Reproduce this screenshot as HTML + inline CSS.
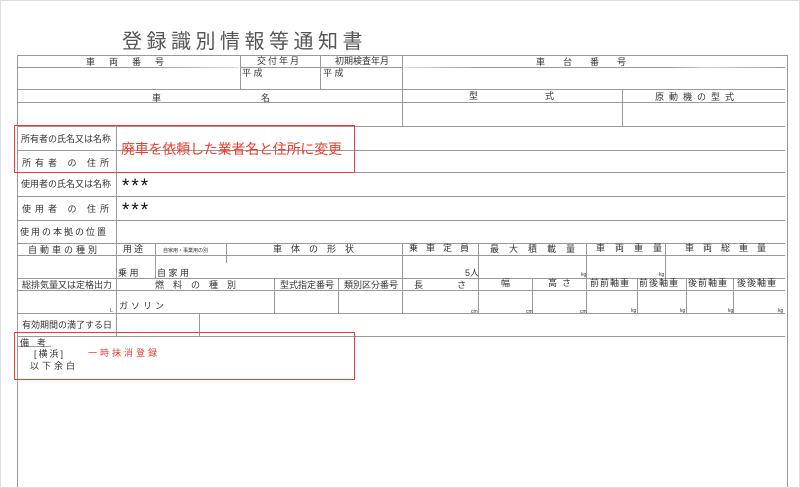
<!DOCTYPE html><html><head><meta charset="utf-8"><style>
body{margin:0;width:800px;height:488px;background:#fff;position:relative;overflow:hidden;font-family:"Liberation Sans","Noto Sans CJK JP",sans-serif;color:#333}
.h{position:absolute;height:1px;background:#999}
.v{position:absolute;width:1px;background:#999}
.t{position:absolute;font-size:9px;white-space:nowrap;line-height:10px}
.r{position:absolute;border:1.5px solid #e8402f}
</style></head><body>
<div style="position:absolute;left:0;top:0;width:798px;height:486px;border:1px solid #ddd"></div>
<div class="t" style="left:122px;top:30px;font-size:20px;line-height:24px;letter-spacing:4.5px;color:#555">登録識別情報等通知書</div>
<!-- frame -->
<div class="v" style="left:17px;top:55px;height:432px"></div>
<div class="v" style="left:787px;top:55px;height:432px"></div>
<div class="h" style="left:17px;top:55px;width:771px"></div>
<div class="h" style="left:17px;top:67px;width:222px;background:linear-gradient(90deg,#999 60%,#ddd)"></div>
<div class="h" style="left:402px;top:67px;width:383px;background:linear-gradient(90deg,#ddd,#999 20%,#999 70%,#ccc 80%,#999)"></div>
<div class="h" style="left:240px;top:67px;width:162px"></div>
<div class="h" style="left:17px;top:89px;width:768px"></div>
<div class="h" style="left:17px;top:102px;width:768px"></div>
<div class="h" style="left:17px;top:126px;width:768px"></div>
<div class="h" style="left:17px;top:150px;width:768px"></div>
<div class="h" style="left:17px;top:172px;width:768px"></div>
<div class="h" style="left:17px;top:196px;width:768px"></div>
<div class="h" style="left:17px;top:220px;width:768px"></div>
<div class="h" style="left:17px;top:243px;width:768px"></div>
<div class="h" style="left:17px;top:255px;width:768px"></div>
<div class="h" style="left:17px;top:278px;width:768px"></div>
<div class="h" style="left:17px;top:290px;width:768px"></div>
<div class="h" style="left:17px;top:313px;width:768px"></div>
<div class="h" style="left:17px;top:336px;width:768px"></div>
<div class="h" style="left:17px;top:346px;width:34px"></div>
<!-- verticals -->
<div class="v" style="left:240px;top:55px;height:34px"></div>
<div class="v" style="left:320px;top:55px;height:34px"></div>
<div class="v" style="left:402px;top:55px;height:34px"></div>
<div class="v" style="left:402px;top:89px;height:37px"></div>
<div class="v" style="left:622px;top:89px;height:37px"></div>
<div class="v" style="left:116px;top:126px;height:210px"></div>
<div class="v" style="left:155px;top:243px;height:35px"></div>
<div class="v" style="left:226px;top:243px;height:20px"></div>
<div class="v" style="left:402px;top:243px;height:70px"></div>
<div class="v" style="left:478px;top:243px;height:70px"></div>
<div class="v" style="left:586px;top:243px;height:70px"></div>
<div class="v" style="left:665px;top:243px;height:35px"></div>
<div class="v" style="left:274px;top:278px;height:35px"></div>
<div class="v" style="left:338px;top:278px;height:35px"></div>
<div class="v" style="left:532px;top:278px;height:35px"></div>
<div class="v" style="left:637px;top:278px;height:35px"></div>
<div class="v" style="left:686px;top:278px;height:35px"></div>
<div class="v" style="left:733px;top:278px;height:35px"></div>
<div class="v" style="left:199px;top:313px;height:23px"></div>
<!-- text -->
<div class="t" style="left:86px;top:57px;letter-spacing:14px">車両番号</div>
<div class="t" style="left:257px;top:56px;letter-spacing:2px">交付年月</div>
<div class="t" style="left:335px;top:56px">初期検査年月</div>
<div class="t" style="left:242px;top:68px">平 成</div>
<div class="t" style="left:323px;top:68px">平 成</div>
<div class="t" style="left:536px;top:57px;letter-spacing:18px">車台番号</div>
<div class="t" style="left:152px;top:93px">車</div>
<div class="t" style="left:261px;top:93px">名</div>
<div class="t" style="left:469px;top:91px">型</div>
<div class="t" style="left:545px;top:91px">式</div>
<div class="t" style="left:655px;top:92px;letter-spacing:5px">原動機の型式</div>
<div class="t" style="left:21px;top:134px">所有者の氏名又は名称</div>
<div class="t" style="left:22px;top:158px;letter-spacing:4px">所有者 の 住所</div>
<div class="t" style="left:21px;top:179px">使用者の氏名又は名称</div>
<div class="t" style="left:22px;top:204px;letter-spacing:4px">使用者 の 住所</div>
<div class="t" style="left:20px;top:227px;letter-spacing:2px">使用の本拠の位置</div>
<div class="t" style="left:121px;top:140px;font-size:14px;line-height:18px;letter-spacing:-0.2px;color:#e8402f">廃車を依頼した業者名と住所に変更</div>
<div class="t" style="left:122px;top:179px;font-size:19px;line-height:16px;letter-spacing:2px;color:#111">***</div>
<div class="t" style="left:122px;top:203px;font-size:19px;line-height:16px;letter-spacing:2px;color:#111">***</div>
<div class="t" style="left:28px;top:245px;letter-spacing:3px">自動車の種別</div>
<div class="t" style="left:123px;top:244px;letter-spacing:2px">用途</div>
<div class="t" style="left:163px;top:246px;font-size:5px">自家用・事業用の別</div>
<div class="t" style="left:273px;top:244px;letter-spacing:9px">車体の形状</div>
<div class="t" style="left:118px;top:268px">乗 用</div>
<div class="t" style="left:157px;top:268px">自 家 用</div>
<div class="t" style="left:409px;top:243px;letter-spacing:8px">乗車定員</div>
<div class="t" style="left:465px;top:268px">5人</div>
<div class="t" style="left:490px;top:244px;letter-spacing:10px">最大積載量</div>
<div class="t" style="left:596px;top:243px;letter-spacing:10px">車両重量</div>
<div class="t" style="left:685px;top:243px;letter-spacing:9px">車両総重量</div>
<div class="t" style="left:581px;top:270px;font-size:5px">kg</div>
<div class="t" style="left:659px;top:270px;font-size:5px">kg</div>
<div class="t" style="left:22px;top:280px">総排気量又は定格出力</div>
<div class="t" style="left:155px;top:280px;letter-spacing:9px">燃料の種別</div>
<div class="t" style="left:280px;top:280px">型式指定番号</div>
<div class="t" style="left:344px;top:280px">類別区分番号</div>
<div class="t" style="left:414px;top:280px">長</div>
<div class="t" style="left:457px;top:280px">さ</div>
<div class="t" style="left:501px;top:278px">幅</div>
<div class="t" style="left:548px;top:278px;letter-spacing:5px">高さ</div>
<div class="t" style="left:590px;top:278px;letter-spacing:1px">前前軸重</div>
<div class="t" style="left:639px;top:278px;letter-spacing:1px">前後軸重</div>
<div class="t" style="left:688px;top:278px;letter-spacing:1px">後前軸重</div>
<div class="t" style="left:737px;top:278px;letter-spacing:1px">後後軸重</div>
<div class="t" style="left:110px;top:306px;font-size:5px">L</div>
<div class="t" style="left:119px;top:301px;letter-spacing:3px">ガソリン</div>
<div class="t" style="left:471px;top:307px;font-size:5px">cm</div>
<div class="t" style="left:526px;top:307px;font-size:5px">cm</div>
<div class="t" style="left:580px;top:307px;font-size:5px">cm</div>
<div class="t" style="left:631px;top:306px;font-size:5px">kg</div>
<div class="t" style="left:680px;top:306px;font-size:5px">kg</div>
<div class="t" style="left:728px;top:306px;font-size:5px">kg</div>
<div class="t" style="left:778px;top:306px;font-size:5px">kg</div>
<div class="t" style="left:22px;top:320px">有効期間の満了する日</div>
<div class="t" style="left:20px;top:338px;letter-spacing:8px">備考</div>
<div class="t" style="left:34px;top:349px;letter-spacing:2px">[横浜]</div>
<div class="t" style="left:88px;top:348px;letter-spacing:3px;color:#e8402f">一時抹消登録</div>
<div class="t" style="left:30px;top:361px;letter-spacing:3px">以下余白</div>
<div class="r" style="left:14px;top:125px;width:339px;height:46px"></div>
<div class="r" style="left:14px;top:332px;width:339px;height:46px"></div>
</body></html>
